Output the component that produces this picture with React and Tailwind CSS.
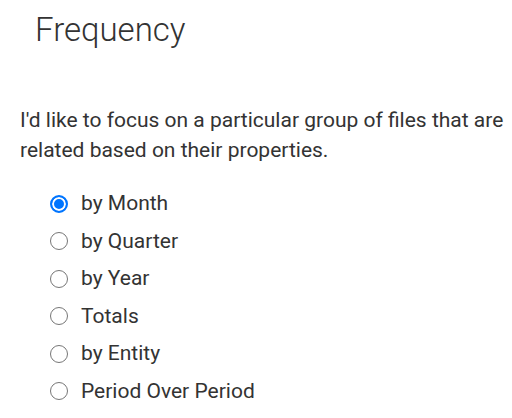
import { useState } from 'react';

const OPTIONS = ['by Month', 'by Quarter', 'by Year', 'Totals', 'by Entity', 'Period Over Period'];

export default function App() {
  const [selected, setSelected] = useState('by Month');

  return (
    <div className="min-h-[418px] bg-white text-[#333] font-['Roboto',sans-serif]">
      <h1 className="pl-[35px] pt-[10px] text-[33px] leading-[40px] font-light">Frequency</h1>

      <p className="mt-[55px] pl-[20px] pr-1 text-[21px] leading-[30px]">
        I'd like to focus on a particular group of files that are related based on their properties.
      </p>

      <div className="mt-[20px] pl-[50px] flex flex-col">
        {OPTIONS.map((opt) => (
          <label key={opt} className="flex items-center h-[37.5px] text-[21px] cursor-pointer">
            {/* custom radio so size & colours match the native look */}
            <input
              type="radio"
              name="frequency"
              className="appearance-none m-0 shrink-0 w-[18px] h-[18px] rounded-full border-[1.5px] border-[#767676] bg-white checked:border-2 checked:border-[#0075ff] checked:bg-[#0075ff] checked:shadow-[inset_0_0_0_2px_white]"
              checked={selected === opt}
              onChange={() => setSelected(opt)}
            />
            <span className="ml-[13px]">{opt}</span>
          </label>
        ))}
      </div>
    </div>
  );
}
